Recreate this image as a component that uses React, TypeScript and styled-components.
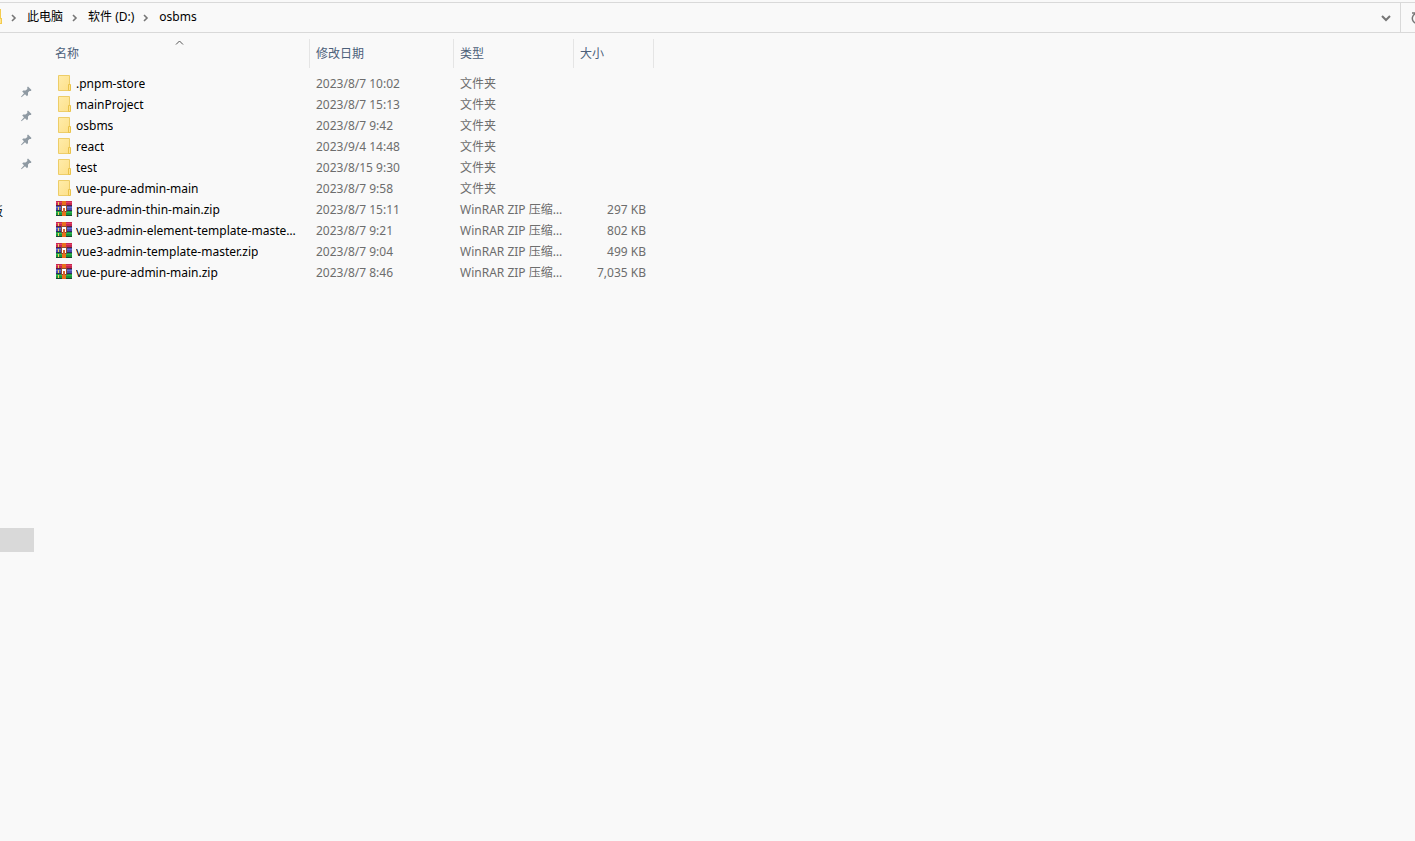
import React from "react";
import styled, { createGlobalStyle } from "styled-components";

const GlobalStyle = createGlobalStyle`
  * { box-sizing: border-box; }
  body {
    margin: 0;
    background: #f9f9f9;
    color: #000;
    font-family: "Noto Sans", "Noto Sans CJK SC", sans-serif;
    font-size: 12px;
    line-height: 21px;
  }
  button, input { font: inherit; color: inherit; }
`;

const Explorer = styled.div`
  display: flex;
  flex-direction: column;
  min-height: 100vh;
  overflow: hidden;
`;

const AddressBar = styled.header`
  display: flex;
  height: 31px;
  margin-top: 2px;
  border-top: 1px solid #d9d9d9;
  border-bottom: 1px solid #d9d9d9;
`;

const Breadcrumbs = styled.nav`
  display: flex;
  flex: 1;
  align-items: center;
  padding-bottom: 2px;
`;

const Crumb = styled.a`
  color: #000;
  text-decoration: none;
  white-space: nowrap;
`;

const BarButton = styled.button<{ $edge?: boolean }>`
  display: flex;
  flex: none;
  align-items: center;
  justify-content: ${(p) => (p.$edge ? "flex-start" : "center")};
  width: ${(p) => (p.$edge ? "15px" : "28px")};
  padding: 0;
  border: 0;
  border-left: ${(p) => (p.$edge ? "1px solid #d9d9d9" : "0")};
  background: none;
  overflow: hidden;
`;

const Body = styled.div`
  display: flex;
  flex: 1;
`;

const Sidebar = styled.aside`
  display: flex;
  flex-direction: column;
  flex: none;
  width: 34px;
  margin-right: 14px;
  padding-top: 47px;
`;

const SideItem = styled.div<{ $selected?: boolean }>`
  display: flex;
  align-items: center;
  height: 24px;
  margin-top: ${(p) => (p.$selected ? "304px" : "0")};
  padding-right: 2px;
  line-height: 20px;
  background: ${(p) => (p.$selected ? "#d9d9d9" : "transparent")};
`;

const SidePin = styled.span`
  display: flex;
  margin-left: auto;
`;

const SideLabel = styled.span`
  display: flex;
  justify-content: flex-end;
  width: 3px;
  overflow: hidden;
`;

const FileTable = styled.table`
  align-self: flex-start;
  width: 606px;
  margin-top: 6px;
  border-collapse: separate;
  border-spacing: 0;
  table-layout: fixed;
`;

const HeadCell = styled.th<{ $first?: boolean }>`
  position: relative;
  height: 29px;
  padding: 0 0 0 ${(p) => (p.$first ? "7px" : "6px")};
  border-right: 1px solid #e5e5e5;
  text-align: left;
  font-weight: 400;
  color: #4c607a;
`;

const SortButton = styled.button`
  padding: 0;
  border: 0;
  background: none;
`;

const SortMark = styled.span`
  position: absolute;
  top: 0;
  left: 0;
  right: 0;
  display: flex;
  justify-content: center;
`;

const Spacer = styled.tr`
  height: 5px;
`;

const Cell = styled.td<{ $name?: boolean; $right?: boolean }>`
  height: 21px;
  padding: ${(p) => (p.$name ? "0 14px 0 8px" : "0 8px 0 6px")};
  color: ${(p) => (p.$name ? "#000" : "#6d6d6d")};
  text-align: ${(p) => (p.$right ? "right" : "left")};
  white-space: nowrap;
  overflow: hidden;
  text-overflow: ellipsis;
`;

const FileName = styled.div`
  display: flex;
  gap: 4px;
`;

const IconSlot = styled.span`
  flex: none;
  padding-top: 2px;
`;

const NameText = styled.span`
  overflow: hidden;
  text-overflow: ellipsis;
`;

const Icon = styled.svg`
  display: block;
  flex: none;
`;

const CrumbArrow = () => (
  <Icon width="25" height="12" viewBox="0 0 25 12">
    <path d="M10 4l3 3-3 3" fill="none" stroke="#767676" strokeWidth="1.600" />
  </Icon>
);

const FolderEdge = () => (
  <Icon width="2" height="16" viewBox="0 0 2 16">
    <path d="M0 0h1v9h1v6H0z" fill="#f3cb4e" />
    <path d="M0 10h1v4H0z" fill="#ffe48f" />
  </Icon>
);

const FolderIcon = () => (
  <Icon width="16" height="16" viewBox="0 0 16 16">
    <defs>
      <linearGradient id="folder" x1="0" y1="0" x2="1" y2="1">
        <stop offset="0" stopColor="#ffecaa" />
        <stop offset="1" stopColor="#fde08a" />
      </linearGradient>
    </defs>
    <path d="M2.500 .5h11v15h-11z" fill="url(#folder)" stroke="#edcd68" />
    <path d="M12.500 9.500h2v6h-2z" fill="#ffe48f" stroke="#eac34b" />
  </Icon>
);

const ZipIcon = () => (
  <Icon width="16" height="16" viewBox="0 0 16 16">
    <path d="M0 0h16v5H0z" fill="#c8284f" />
    <path d="M0 5h16v5H0z" fill="#4a4eae" />
    <path d="M0 10h16v5H0z" fill="#17963a" />
    <path d="M0 1h16v1H0z" fill="#e0426a" />
    <path d="M0 6h16v1H0z" fill="#6a6fd0" />
    <path d="M0 11h16v1H0z" fill="#2fb455" />
    <path d="M0 4h16v1H0zM0 9h16v1H0zM0 14h16v1H0z" fill="#1c1c30" opacity=".65" />
    <path d="M2 1h1v3H2zM2 6h1v3H2zM2 11h1v3H2z" fill="#f4d35c" />
    <path d="M6 0h4v15H6z" fill="#e8701c" />
    <path d="M5 4h6v7H5z" fill="#8a4a34" />
    <path d="M6 10V5h4v5H9V7H7v3z" fill="#fff" />
    <path d="M7 7h2v4H7z" fill="#d8602a" />
  </Icon>
);

const PinIcon = () => (
  <Icon width="11" height="12" viewBox="0 0 11 12">
    <path
      d="M7 .5L10.500 4l-.7 1-1.300-.1L7 6.500 7 9l-1 1.200L4 8.300.5 11.300 0 10.800 3 7.300 1.200 5.500 2.200 4.500H4.500L6.400 3 6.200 1.300z"
      fill="#8f9aa3"
    />
  </Icon>
);

const files = [
  { name: ".pnpm-store", date: "2023/8/7 10:02" },
  { name: "mainProject", date: "2023/8/7 15:13" },
  { name: "osbms", date: "2023/8/7 9:42" },
  { name: "react", date: "2023/9/4 14:48" },
  { name: "test", date: "2023/8/15 9:30" },
  { name: "vue-pure-admin-main", date: "2023/8/7 9:58" },
  { name: "pure-admin-thin-main.zip", date: "2023/8/7 15:11", size: "297 KB" },
  { name: "vue3-admin-element-template-master.zip", date: "2023/8/7 9:21", size: "802 KB" },
  { name: "vue3-admin-template-master.zip", date: "2023/8/7 9:04", size: "499 KB" },
  { name: "vue-pure-admin-main.zip", date: "2023/8/7 8:46", size: "7,035 KB" },
];

export default function App() {
  return (
    <Explorer>
      <GlobalStyle />
      <AddressBar>
        <Breadcrumbs>
          <FolderEdge />
          <CrumbArrow />
          <Crumb href="#pc">此电脑</Crumb>
          <CrumbArrow />
          <Crumb href="#d">软件 (D:)</Crumb>
          <CrumbArrow />
          <Crumb href="#osbms">osbms</Crumb>
        </Breadcrumbs>
        <BarButton aria-label="Previous locations">
          <Icon width="10" height="8" viewBox="0 0 10 8">
            <path d="M1 2l4 4 4-4" fill="none" stroke="#767676" strokeWidth="2" />
          </Icon>
        </BarButton>
        <BarButton $edge aria-label="Refresh">
          <Icon width="24" height="12" viewBox="0 0 24 12">
            <path d="M20 3a5 5 0 1 1-6-1M11 1h4v4" fill="none" stroke="#767676" strokeWidth="1.500" />
          </Icon>
        </BarButton>
      </AddressBar>
      <Body>
        <Sidebar>
          {[0, 1, 2, 3].map((n) => (
            <SideItem key={n}>
              <SidePin><PinIcon /></SidePin>
            </SideItem>
          ))}
          <SideItem />
          <SideItem><SideLabel>板</SideLabel></SideItem>
          <SideItem $selected />
        </Sidebar>
        <FileTable>
          <colgroup>
            <col width="262" />
            <col width="144" />
            <col width="120" />
            <col width="80" />
          </colgroup>
          <thead>
            <tr>
              <HeadCell $first aria-sort="ascending">
                <SortButton>名称</SortButton>
                <SortMark>
                  <Icon width="10" height="6" viewBox="0 0 10 6">
                    <path d="M2 5.500L5.500 2 9 5.500" fill="none" stroke="#555" />
                  </Icon>
                </SortMark>
              </HeadCell>
              <HeadCell><SortButton>修改日期</SortButton></HeadCell>
              <HeadCell><SortButton>类型</SortButton></HeadCell>
              <HeadCell><SortButton>大小</SortButton></HeadCell>
            </tr>
          </thead>
          <tbody>
            <Spacer aria-hidden="true" />
            {files.map((f) => (
              <tr key={f.name}>
                <Cell $name>
                  <FileName>
                    <IconSlot>{f.size ? <ZipIcon /> : <FolderIcon />}</IconSlot>
                    <NameText>{f.name}</NameText>
                  </FileName>
                </Cell>
                <Cell>{f.date}</Cell>
                <Cell>{f.size ? "WinRAR ZIP 压缩文件" : "文件夹"}</Cell>
                <Cell $right>{f.size}</Cell>
              </tr>
            ))}
          </tbody>
        </FileTable>
      </Body>
    </Explorer>
  );
}
